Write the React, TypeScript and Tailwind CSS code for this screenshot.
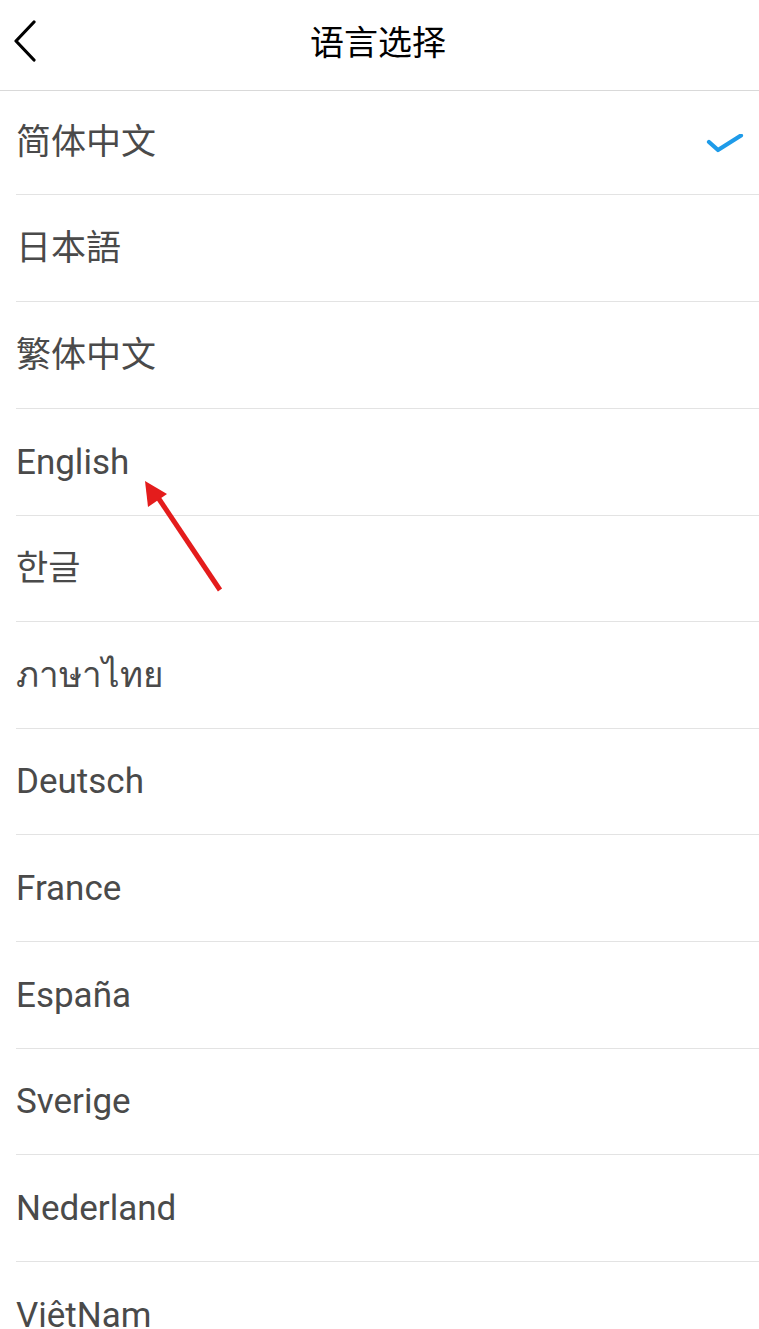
import React from "react";

// Language picker: plain list, current language gets a blue tick.

const LANGS: { label: string; h: string }[] = [
  { label: "简体中文", h: "h-[104px]" },
  { label: "日本語", h: "h-[107px]" },
  { label: "繁体中文", h: "h-[107px]" },
  { label: "English", h: "h-[107px]" },
  { label: "한글", h: "h-[106px]" },
  { label: "ภาษาไทย", h: "h-[107px]" },
  { label: "Deutsch", h: "h-[106px]" },
  { label: "France", h: "h-[107px]" },
  { label: "España", h: "h-[107px]" },
  { label: "Sverige", h: "h-[106px]" },
  { label: "Nederland", h: "h-[107px]" },
  { label: "ViêtNam", h: "h-[107px]" },
];

const FONT =
  "font-['Roboto','Noto_Sans_CJK_SC','Noto_Sans_CJK_KR','Noto_Sans_CJK_JP','Noto_Sans',sans-serif]";

function Check() {
  return (
    <svg width="40" height="26" viewBox="0 0 40 26" className="mt-[8px] shrink-0">
      <path d="M3 8 L12 16 L35 1.5" fill="none" stroke="#1e9be9" strokeWidth="4.2" strokeLinecap="round" strokeLinejoin="round" />
    </svg>
  );
}

export default function App() {
  const current = "简体中文";

  return (
    <div className={`relative min-h-[1329px] w-[759px] overflow-hidden bg-white ${FONT}`}>
      <header className="relative flex h-[91px] items-center justify-center border-b border-[#d9d9d9] pb-[5px]">
        <button className="absolute left-[12px] top-[20px] p-0">
          <svg width="28" height="42" viewBox="0 0 28 42">
            <path d="M22 2 L4 21 L22 40" fill="none" stroke="#000" strokeWidth="3.2" strokeLinecap="round" strokeLinejoin="round" />
          </svg>
        </button>
        <h1 className="pr-[3px] text-[34px] font-normal leading-none text-black">语言选择</h1>
      </header>

      <ul className="pl-4">
        {LANGS.map((l, i) => (
          <li
            key={l.label}
            className={`flex items-center justify-between pr-[13px] ${l.h} ${i < LANGS.length - 1 ? "border-b border-[#e3e3e3]" : ""}`}
          >
            <span className="text-[35px] leading-none text-[#4a4a4a]">{l.label}</span>
            {l.label === current && <Check />}
          </li>
        ))}
      </ul>

      {/* annotation arrow pointing at English */}
      <svg className="pointer-events-none absolute left-0 top-0" width="759" height="1329" viewBox="0 0 759 1329">
        <line x1="220" y1="590" x2="157" y2="496" stroke="#e41c1c" strokeWidth="5" strokeLinecap="butt" />
        <polygon points="145,481 167,494 148,507" fill="#e41c1c" />
      </svg>
    </div>
  );
}
